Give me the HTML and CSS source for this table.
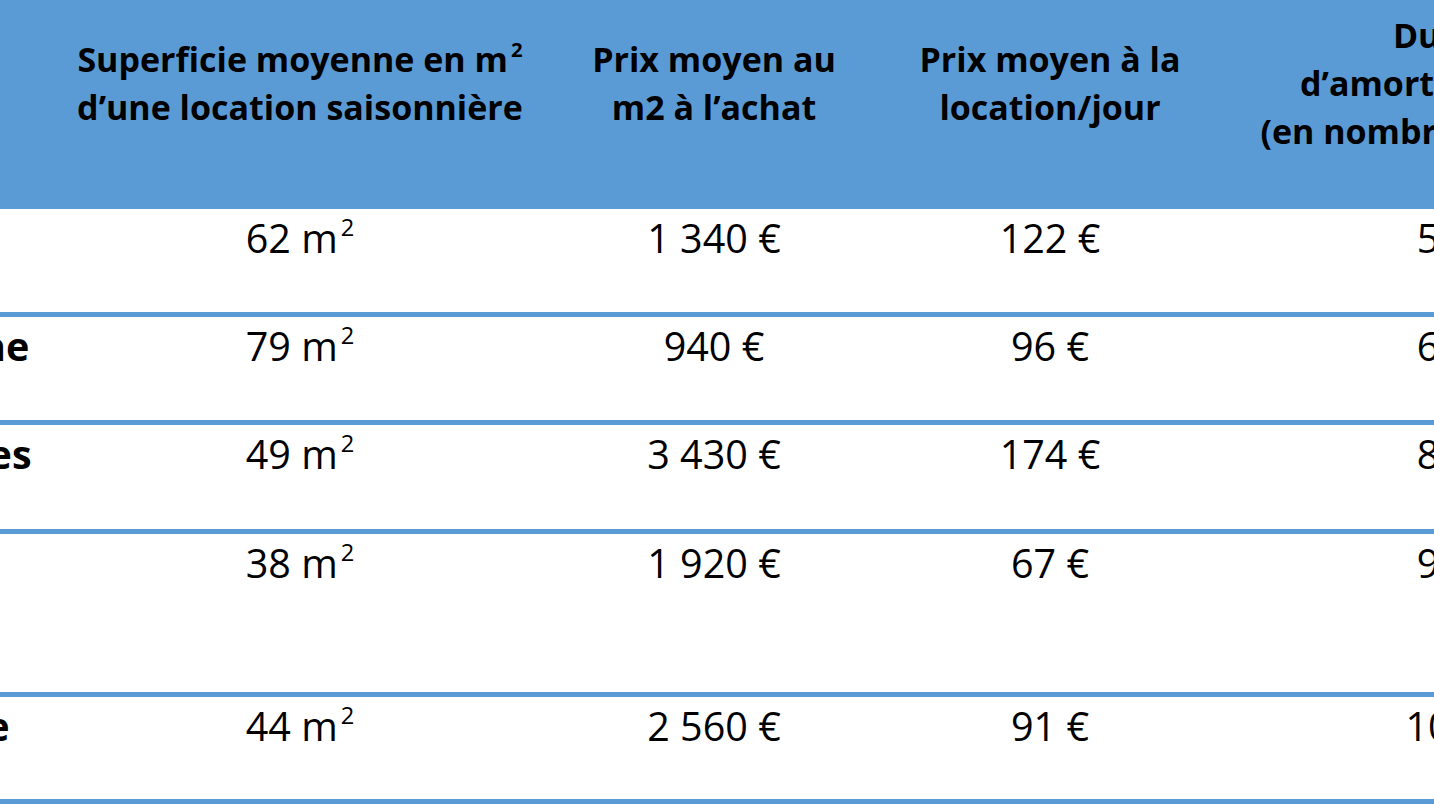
FILE: index.html
```html
<!DOCTYPE html>
<html lang="fr">
<head>
<meta charset="utf-8">
<title>Location saisonnière</title>
<link rel="stylesheet" href="styles.css">
</head>
<body>
<div class="frame">
  <table class="grid">
    <colgroup>
      <col class="c-a">
      <col class="c-b">
      <col class="c-c">
      <col class="c-d">
      <col class="c-e">
    </colgroup>
    <thead>
      <tr class="head">
        <th class="first">Destination</th>
        <th>Superficie moyenne en m<sup class="sq">2</sup><br>d’une location saisonnière</th>
        <th>Prix moyen au<br>m2 à l’achat</th>
        <th>Prix moyen à la<br>location/jour</th>
        <th>Durée<br>d’amortissement<br>(en nombre d’années)</th>
      </tr>
    </thead>
    <tbody>
      <tr class="r1">
        <td class="first">Mer</td>
        <td>62 m<sup class="sq">2</sup></td>
        <td>1 340 €</td>
        <td>122 €</td>
        <td>5,7</td>
      </tr>
      <tr class="r2">
        <td class="first">Campagne</td>
        <td>79 m<sup class="sq">2</sup></td>
        <td>940 €</td>
        <td>96 €</td>
        <td>6,4</td>
      </tr>
      <tr class="r3">
        <td class="first">Les Vosges</td>
        <td>49 m<sup class="sq">2</sup></td>
        <td>3 430 €</td>
        <td>174 €</td>
        <td>8,1</td>
      </tr>
      <tr class="r4">
        <td class="first">Ville</td>
        <td>38 m<sup class="sq">2</sup></td>
        <td>1 920 €</td>
        <td>67 €</td>
        <td>9,1</td>
      </tr>
      <tr class="r5">
        <td class="first">Auvergne</td>
        <td>44 m<sup class="sq">2</sup></td>
        <td>2 560 €</td>
        <td>91 €</td>
        <td>10,3</td>
      </tr>
    </tbody>
  </table>
</div>
</body>
</html>
```
FILE: styles.css
```css
html, body {
  margin: 0;
  padding: 0;
  background: #ffffff;
}

.frame {
  width: 1434px;
  height: 807px;
  overflow: hidden;
  background: #ffffff;
}

.grid {
  border-collapse: separate;
  border-spacing: 0;
  table-layout: fixed;
  width: 1870px;
  margin-left: -199px;
  font-family: "Open Sans", "DejaVu Sans", sans-serif;
  color: #000000;
}

.c-a { width: 253px; }
.c-b { width: 492px; }
.c-c { width: 336px; }
.c-d { width: 336px; }
.c-e { width: 453px; }

.head {
  height: 209px;
}

.head th {
  background: #5b9bd5;
  font-weight: 700;
  font-size: 34px;
  line-height: 48px;
  text-align: center;
  vertical-align: middle;
  padding: 0 0 44px 0;
  white-space: nowrap;
}

.head th.first {
  text-align: left;
  padding-left: 20px;
  color: #5b9bd5;
}

tbody td {
  font-size: 39.5px;
  line-height: 48px;
  font-weight: 400;
  text-align: center;
  vertical-align: top;
  padding: 5px 0 0 0;
  border-bottom: 5px solid #5b9bd5;
  white-space: nowrap;
}

tbody td.first {
  text-align: left;
  font-weight: 700;
  padding-left: 20px;
}

.r1 { height: 108px; }
.r2 { height: 108px; }
.r3 { height: 109px; }
.r4 { height: 163px; }
.r5 { height: 107px; }

.sq {
  font-size: 0.6em;
  line-height: 0;
  vertical-align: 0.72em;
  margin-left: 3px;
}
```
